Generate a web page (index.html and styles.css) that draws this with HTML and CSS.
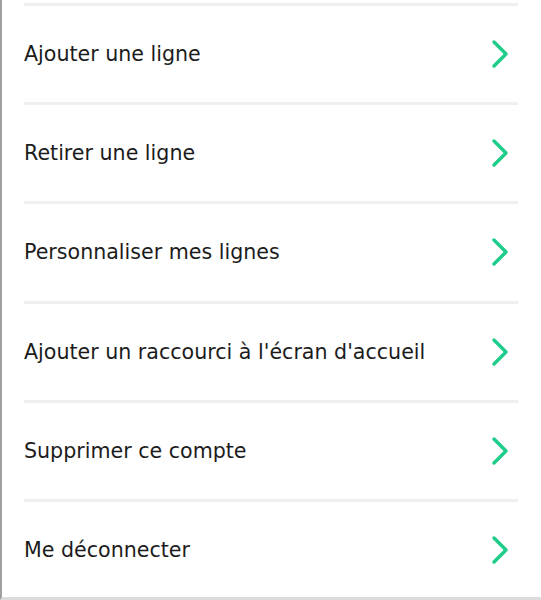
FILE: index.html
```html
<!DOCTYPE html>
<html lang="fr">
<head>
<meta charset="UTF-8">
<meta name="viewport" content="width=device-width, initial-scale=1.0">
<title>Mon compte</title>
<link rel="stylesheet" href="styles.css">
</head>
<body>
<div class="panel">
    <ul class="menu">
        <li class="menu-item"><span>Ajouter une ligne</span><svg class="chevron" viewBox="0 0 20 32"><polyline points="4,4 16,16 4,28"/></svg></li>
        <li class="menu-item"><span>Retirer une ligne</span><svg class="chevron" viewBox="0 0 20 32"><polyline points="4,4 16,16 4,28"/></svg></li>
        <li class="menu-item"><span>Personnaliser mes lignes</span><svg class="chevron" viewBox="0 0 20 32"><polyline points="4,4 16,16 4,28"/></svg></li>
        <li class="menu-item"><span>Ajouter un raccourci à l'écran d'accueil</span><svg class="chevron" viewBox="0 0 20 32"><polyline points="4,4 16,16 4,28"/></svg></li>
        <li class="menu-item"><span>Supprimer ce compte</span><svg class="chevron" viewBox="0 0 20 32"><polyline points="4,4 16,16 4,28"/></svg></li>
        <li class="menu-item"><span>Me déconnecter</span><svg class="chevron" viewBox="0 0 20 32"><polyline points="4,4 16,16 4,28"/></svg></li>
    </ul>
</div>
</body>
</html>
```

FILE: styles.css
```css
body {
margin: 0;
padding: 0;
background: #fff;
font-family: "DejaVu Sans", sans-serif;
color: #1c1c1c;
}
.panel {
box-sizing: border-box;
height: 600px;
border-left: 2px solid #a0a0a0;
border-bottom: 3px solid #dcdcdc;
padding-top: 3px;
overflow: hidden;
}
.menu {
list-style: none;
margin: 0 23px 0 22px;
padding: 0;
}
.menu-item {
box-sizing: border-box;
display: flex;
align-items: center;
justify-content: space-between;
height: 99.2px;
border-top: 3px solid #efefef;
font-size: 20.6px;
}
.chevron {
width: 20px;
height: 32px;
margin-right: 8px;
fill: none;
stroke: #20cc8a;
stroke-width: 3.5;
stroke-linecap: round;
stroke-linejoin: round;
}
```
